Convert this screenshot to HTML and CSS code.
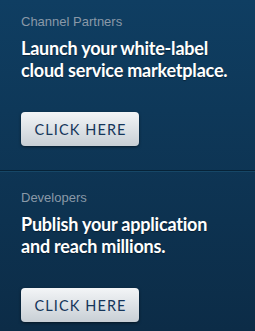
FILE: index.html
```html
<!DOCTYPE html>
<html lang="en">
<head>
    <meta charset="UTF-8">
    <meta name="viewport" content="width=device-width, initial-scale=1.0">
    <title>Partners</title>
    <link rel="stylesheet" href="styles.css">
</head>
<body>
    <div class="panel">
        <div class="block first">
            <div class="label">Channel Partners</div>
            <h2>Launch your white-label cloud service marketplace.</h2>
            <a href="#" class="ClickButton">CLICK HERE</a>
        </div>
        <div class="block second">
            <div class="label">Developers</div>
            <h2>Publish your application and reach millions.</h2>
            <a href="#" class="ClickButton">CLICK HERE</a>
        </div>
    </div>
</body>
</html>
```

FILE: styles.css
```css
body {
    margin: 0;
    background: #0c2d48;
}
.panel {
    width: 255px;
    height: 331px;
    overflow: hidden;
    background: linear-gradient(to bottom, #0f3e62, #0c2c47);
}
.block {
    padding: 14px 21px 24px;
}
.first {
    border-bottom: 1px solid #062237;
    box-shadow: 0 1px 0 #164767;
}
.second {
    padding-top: 19px;
}
.label {
    font-family: "Liberation Sans", Arial, sans-serif;
    font-size: 13px;
    line-height: 16px;
    color: #8a99a8;
}
h2 {
    font-family: Lato, sans-serif;
    font-weight: 700;
    font-size: 18px;
    line-height: 22px;
    letter-spacing: -0.2px;
    color: white;
    margin: 7px 0 31px;
    width: 215px;
    text-shadow: 0 1px 1px rgba(0, 0, 0, 0.4);
}
.ClickButton {
    display: flex;
    justify-content: center;
    align-items: center;
    width: 118px;
    height: 34px;
    padding-left: 1px;
    box-sizing: border-box;
    border-radius: 4px;
    background: linear-gradient(to bottom, #f3f5f7, #c8cfd5);
    box-shadow: 0 1px 3px rgba(0, 0, 0, 0.5);
    font-family: Lato, sans-serif;
    font-size: 14.5px;
    letter-spacing: 1.1px;
    color: #15365a;
    text-decoration: none;
}
```
